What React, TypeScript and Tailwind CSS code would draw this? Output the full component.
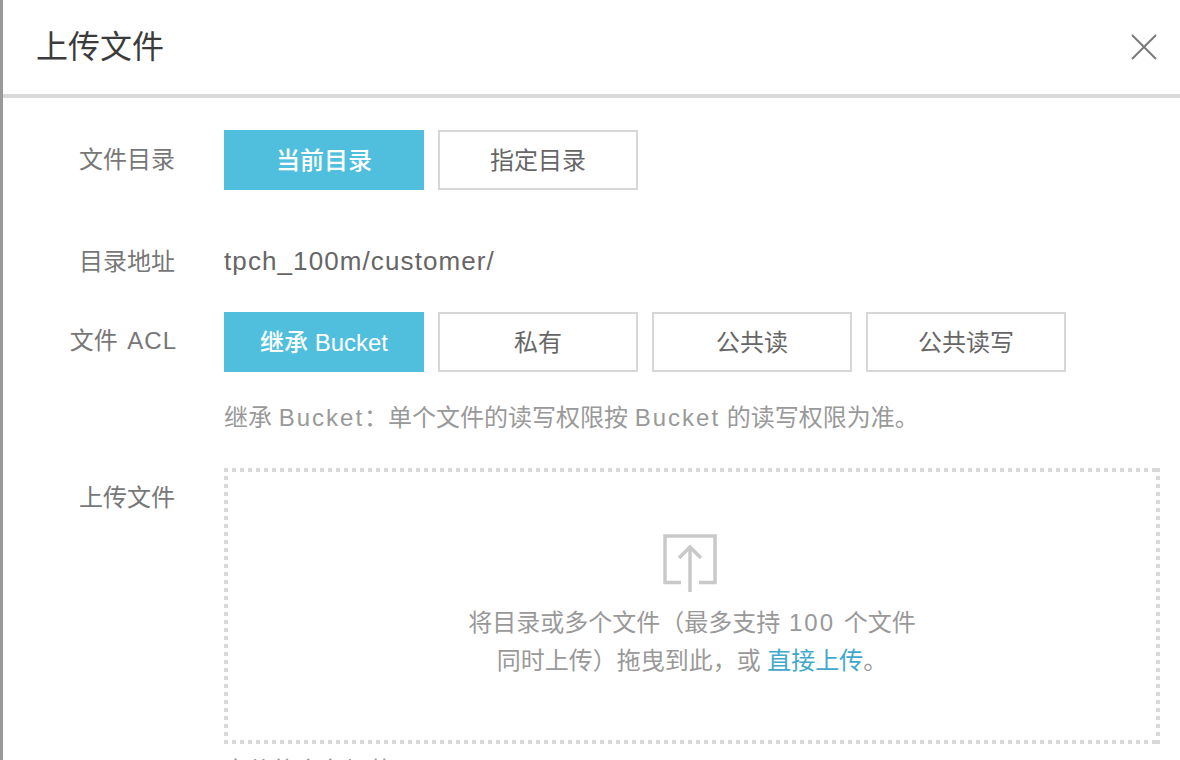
const font = "font-['Liberation_Sans','Noto_Sans_CJK_SC',sans-serif]";

function Opt({ label, active }: { label: string; active?: boolean }) {
  return (
    <button
      className={`h-[60px] w-[200px] pt-[2px] text-[24px] ${
        active ? 'bg-[#4fbfdd] font-medium text-white' : 'border-2 border-[#d7d7d7] bg-white text-[#666]'
      }`}
    >
      {label}
    </button>
  );
}

function Row({
  label,
  children,
  className = '',
  labelClass = 'pt-[13px]',
}: {
  label: React.ReactNode;
  children: React.ReactNode;
  className?: string;
  labelClass?: string;
}) {
  return (
    <div className={`flex ${className}`}>
      <div className={`w-[172px] shrink-0 text-right text-[24px] leading-[34px] text-[#777] ${labelClass}`}>{label}</div>
      <div className="ml-[49px] min-w-0 flex-1">{children}</div>
    </div>
  );
}

const Latin = ({ children }: { children: string }) => <span className="tracking-[2px]">{children}</span>;

export default function App() {
  return (
    <div className={`${font} h-[760px] w-[1180px] overflow-hidden border-l-[3px] border-[#999] bg-white`}>
      <div className="flex h-[98px] items-center justify-between border-b-4 border-[#d9d9d9] pl-[33px] pr-[23px]">
        <h1 className="text-[32px] font-normal text-[#3b3b3b]">上传文件</h1>
        <svg width="26" height="26" viewBox="0 0 26 26" stroke="#7a7a7a" strokeWidth="2" fill="none">
          <path d="M1 1L25 25M25 1L1 25" />
        </svg>
      </div>

      <div className="pr-[20px] pt-[32px]">
        <Row label="文件目录">
          <div className="flex gap-[14px]">
            <Opt label="当前目录" active />
            <Opt label="指定目录" />
          </div>
        </Row>

        <Row label="目录地址" className="mt-[54px]" labelClass="pt-[1px]">
          <div className="text-[26px] leading-[34px] tracking-[1.1px] text-[#666]">tpch_100m/customer/</div>
        </Row>

        <Row
          label={
            <>
              文件 <span className="ml-[3px] -mr-[2px] tracking-[1px]">ACL</span>
            </>
          }
          className="mt-[33px]"
          labelClass="pt-[12px]"
        >
          <div className="flex gap-[14px]">
            <Opt label="继承 Bucket" active />
            <Opt label="私有" />
            <Opt label="公共读" />
            <Opt label="公共读写" />
          </div>
          <p className="mt-[29px] text-[24px] leading-[34px] text-[#999]">
            继承 <Latin>Bucket</Latin>：单个文件的读写权限按 <Latin>Bucket</Latin> 的读写权限为准。
          </p>
        </Row>

        <Row label="上传文件" className="mt-[33px]">
          <div className="flex h-[276px] flex-col items-center bg-[repeating-linear-gradient(90deg,#d9d9d9_0_4px,transparent_4px_8px),repeating-linear-gradient(90deg,#d9d9d9_0_4px,transparent_4px_8px),repeating-linear-gradient(180deg,#d9d9d9_0_4px,transparent_4px_8px),repeating-linear-gradient(180deg,#d9d9d9_0_4px,transparent_4px_8px)] bg-[size:100%_4px,100%_4px,4px_100%,4px_100%] bg-[position:0_0,0_100%,0_0,100%_0] bg-no-repeat pt-[66px]">
            <svg className="mr-[4px]" width="54" height="58" viewBox="0 0 54 58" fill="none" stroke="#c9c9c9" strokeWidth="3.5">
              <path d="M18 48.5H2V2H52V48.5H36" />
              <path d="M27 58V14" />
              <path d="M16 24L27 13L38 24" />
            </svg>
            <div className="mt-[12px] text-center text-[24px] leading-[38px] text-[#999]">
              <div>
                将目录或多个文件（最多支持 <span className="mx-[2px] tracking-[2px]">100</span> 个文件
              </div>
              <div>
                同时上传）拖曳到此，或 <span className="text-[#3fa9cc]">直接上传</span>。
              </div>
            </div>
          </div>
          <p className="mt-[10px] text-[24px] leading-[34px] text-[#999]">文件的命名规范</p>
        </Row>
      </div>
    </div>
  );
}
